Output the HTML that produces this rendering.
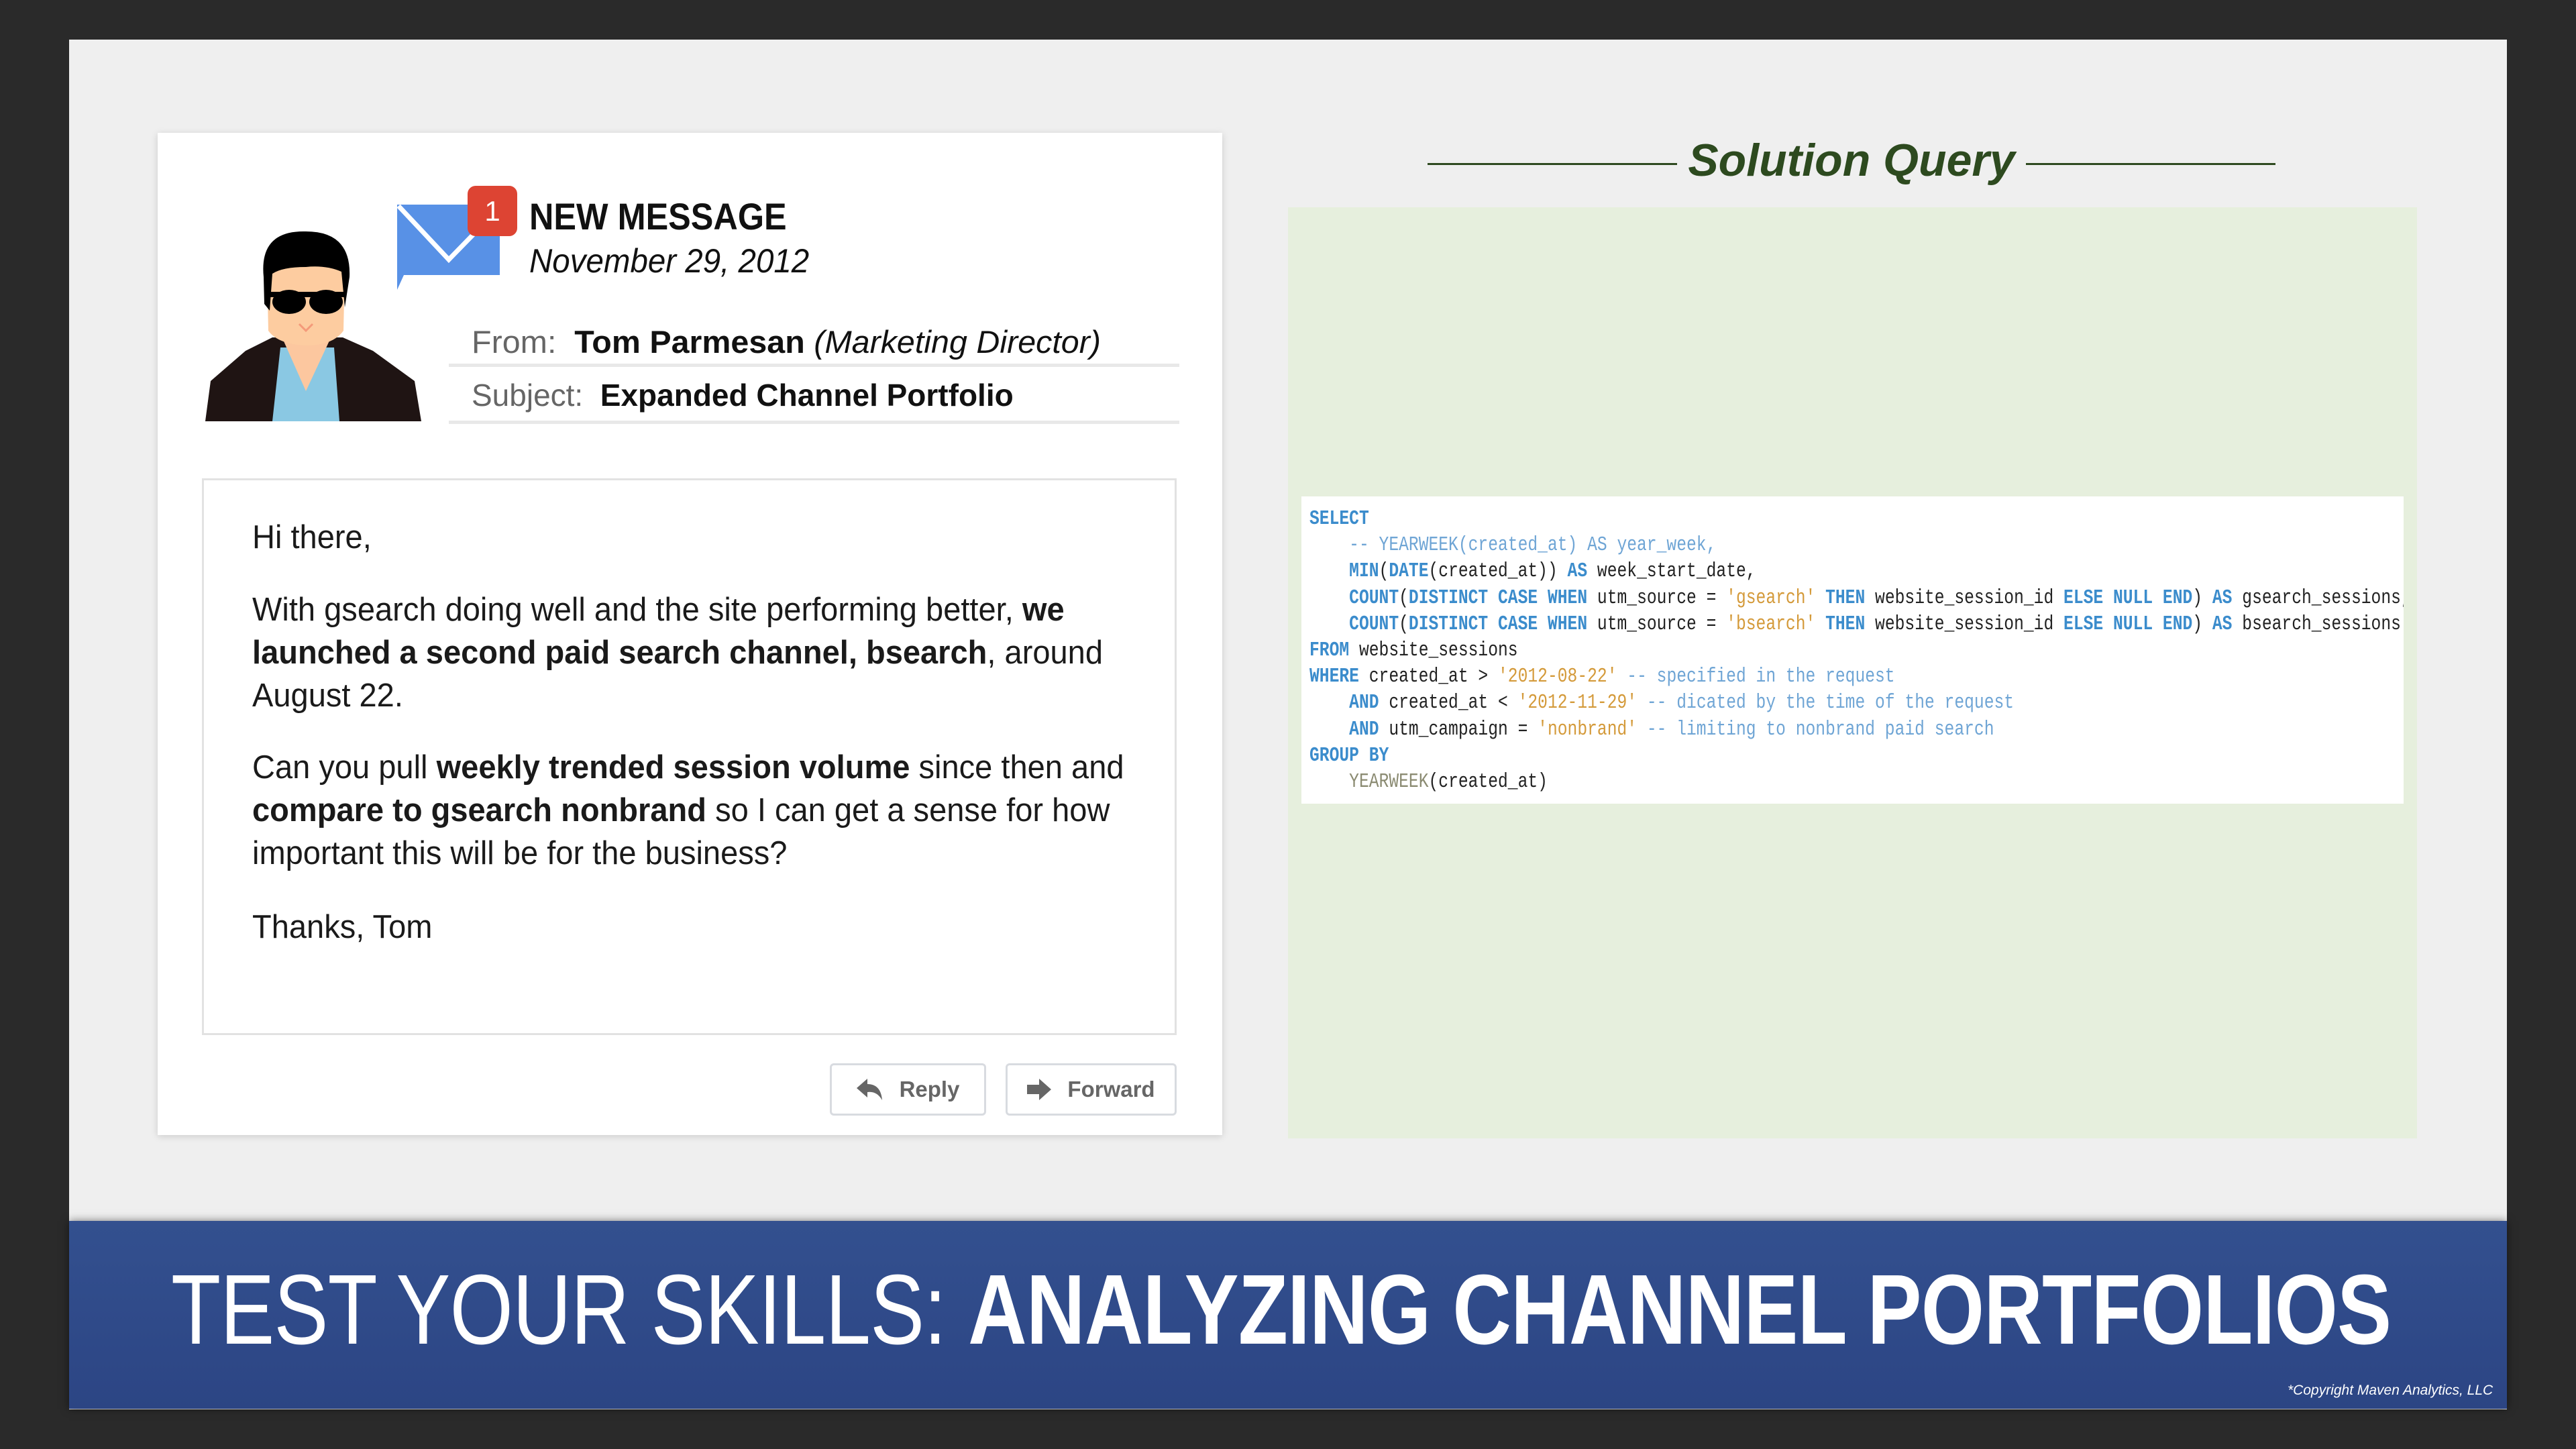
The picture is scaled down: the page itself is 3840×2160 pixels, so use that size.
<!DOCTYPE html>
<html><head><meta charset="utf-8"><style>
*{margin:0;padding:0;box-sizing:border-box}
body{width:3840px;height:2160px;background:#2a2a2a;position:relative;overflow:hidden;font-family:"Liberation Sans",sans-serif}
.abs{position:absolute}
#slide{left:103px;top:59px;width:3634px;height:2042px;background:#efefef}
#banner{left:103px;top:1820px;width:3634px;height:280px;background:linear-gradient(#33508f,#2c4584);box-shadow:0 0 12px rgba(0,0,0,.5)}
#card{left:235px;top:198px;width:1587px;height:1494px;background:#fff;box-shadow:0 2px 10px rgba(0,0,0,.15)}
.t{white-space:nowrap;color:#111}
.div{height:5px;background:#e8e8e8;left:669px;width:1089px}
#body{left:301px;top:713px;width:1453px;height:830px;border:3px solid #e2e2e2}
#body p{position:absolute;left:72px;font-size:49px;line-height:64px;color:#1a1a1a;white-space:nowrap;transform:scaleX(.96);transform-origin:left}
.btn{top:1585px;height:78px;border:3px solid #d8dbe0;border-radius:6px;background:#fff;font-size:33px;color:#666;display:flex;align-items:center;justify-content:center;gap:24px;font-weight:bold}
#green{left:1920px;top:309px;width:1683px;height:1388px;background:#e6efdd}
#code{left:1940px;top:740px;width:1643px;height:458px;background:#fff;overflow:hidden}
#code pre{position:absolute;left:12px;top:14px;font-family:"Liberation Mono",monospace;font-size:31px;line-height:39.2px;color:#222;transform:scaleX(.795);transform-origin:left top}
.k{color:#3b8ccc;font-weight:bold}.s{color:#d49a3a}.c{color:#6fa5d5}.g{color:#8b8b72}
</style></head><body>
<div id="slide" class="abs"></div>
<div id="card" class="abs"></div>
<!-- avatar -->
<svg class="abs" style="left:306px;top:343px" width="323" height="285" viewBox="0 0 323 285">
<path d="M0 285 L8 225 L60 180 L100 160 L205 160 L250 180 L312 225 L322 285Z" fill="#1f1413"/>
<path d="M112 175 L100 285 L200 285 L192 175Z" fill="#8ac8e3"/>
<path d="M110 150 L150 240 L192 150Z" fill="#fcc79f"/>
<path d="M92 60 Q95 30 150 28 Q205 30 208 60 L206 150 Q190 172 150 172 Q108 170 94 150Z" fill="#fdcca0"/>
<path d="M87 70 Q80 0 150 2 Q218 2 215 70 L208 115 L203 62 Q180 52 150 55 Q115 55 100 65 L96 120 L88 110Z" fill="#000"/>
<ellipse cx="125" cy="107" rx="25" ry="18" fill="#000"/><ellipse cx="180" cy="107" rx="25" ry="18" fill="#000"/>
<rect x="95" y="92" width="115" height="8" fill="#000"/>
<path d="M140 140 L150 150 L160 140" stroke="#f49a7a" stroke-width="3" fill="none"/>
</svg>
<!-- envelope -->
<svg class="abs" style="left:588px;top:277px" width="190" height="155" viewBox="0 0 190 155">
<path d="M4 28 L157 28 L157 133 L14 133 L4 155Z" fill="#5891e6"/>
<path d="M6 30 L81 110 L120 70" stroke="#fff" stroke-width="7" fill="none"/>
<rect x="109" y="0" width="74" height="75" rx="12" fill="#dd4433"/>
<text x="146" y="52" font-family="Liberation Sans" font-size="42" fill="#fff" text-anchor="middle">1</text>
</svg>
<div class="abs t" style="left:789px;top:290px;font-size:56px;font-weight:bold;transform:scaleX(.9);transform-origin:left">NEW MESSAGE</div>
<div class="abs t" style="left:789px;top:360px;font-size:50px;font-style:italic;transform:scaleX(.95);transform-origin:left">November 29, 2012</div>
<div class="abs t" style="left:703px;top:482px;font-size:47px;transform:scaleX(1.03);transform-origin:left"><span style="color:#666">From:&nbsp; </span><b>Tom Parmesan</b> <i>(Marketing Director)</i></div>
<div class="abs div" style="top:542px"></div>
<div class="abs t" style="left:703px;top:562px;font-size:46px"><span style="color:#666">Subject:&nbsp; </span><b>Expanded Channel Portfolio</b></div>
<div class="abs div" style="top:627px"></div>
<div id="body" class="abs">
<p style="top:53px">Hi there,</p>
<p style="top:161px">With gsearch doing well and the site performing better, <b>we</b><br><b>launched a second paid search channel, bsearch</b>, around<br>August 22.</p>
<p style="top:396px">Can you pull <b>weekly trended session volume</b> since then and<br><b>compare to gsearch nonbrand</b> so I can get a sense for how<br>important this will be for the business?</p>
<p style="top:634px">Thanks, Tom</p>
</div>
<div class="abs btn" style="left:1237px;width:233px"><svg width="40" height="32" viewBox="0 0 40 32"><path d="M0 14 L16 0 L16 8 Q36 8 38 32 Q30 18 16 20 L16 28Z" fill="#666"/></svg>Reply</div>
<div class="abs btn" style="left:1499px;width:255px"><svg width="36" height="32" viewBox="0 0 36 32"><path d="M0 9 L18 9 L18 0 L36 16 L18 32 L18 23 L0 23Z" fill="#666"/></svg>Forward</div>
<!-- solution -->
<div class="abs" style="left:2128px;top:243px;width:372px;height:3px;background:#2f4a20"></div>
<div class="abs" style="left:3020px;top:243px;width:372px;height:3px;background:#2f4a20"></div>
<div class="abs t" style="left:2500px;top:200px;width:520px;text-align:center;font-size:68px;font-weight:bold;font-style:italic;color:#2d4a1f">Solution Query</div>
<div id="green" class="abs"></div>
<div id="code" class="abs"><pre><span class="k">SELECT</span>
    <span class="c">-- YEARWEEK(created_at) AS year_week,</span>
    <span class="k">MIN</span>(<span class="k">DATE</span>(created_at)) <span class="k">AS</span> week_start_date,
    <span class="k">COUNT</span>(<span class="k">DISTINCT CASE WHEN</span> utm_source = <span class="s">'gsearch'</span> <span class="k">THEN</span> website_session_id <span class="k">ELSE NULL END</span>) <span class="k">AS</span> gsearch_sessions,
    <span class="k">COUNT</span>(<span class="k">DISTINCT CASE WHEN</span> utm_source = <span class="s">'bsearch'</span> <span class="k">THEN</span> website_session_id <span class="k">ELSE NULL END</span>) <span class="k">AS</span> bsearch_sessions
<span class="k">FROM</span> website_sessions
<span class="k">WHERE</span> created_at &gt; <span class="s">'2012-08-22'</span> <span class="c">-- specified in the request</span>
    <span class="k">AND</span> created_at &lt; <span class="s">'2012-11-29'</span> <span class="c">-- dicated by the time of the request</span>
    <span class="k">AND</span> utm_campaign = <span class="s">'nonbrand'</span> <span class="c">-- limiting to nonbrand paid search</span>
<span class="k">GROUP BY</span>
    <span class="g">YEARWEEK</span>(created_at)</pre></div>
<div id="banner" class="abs"></div>
<div class="abs t" style="left:255px;top:1868px;font-size:148px;color:#fff;letter-spacing:-1px;transform:scaleX(.82);transform-origin:left"><span style="font-weight:300">TEST YOUR SKILLS: </span><b>ANALYZING CHANNEL PORTFOLIOS</b></div>
<div class="abs t" style="left:3410px;top:2061px;font-size:21px;font-style:italic;color:#fff">*Copyright Maven Analytics, LLC</div>
</body></html>
